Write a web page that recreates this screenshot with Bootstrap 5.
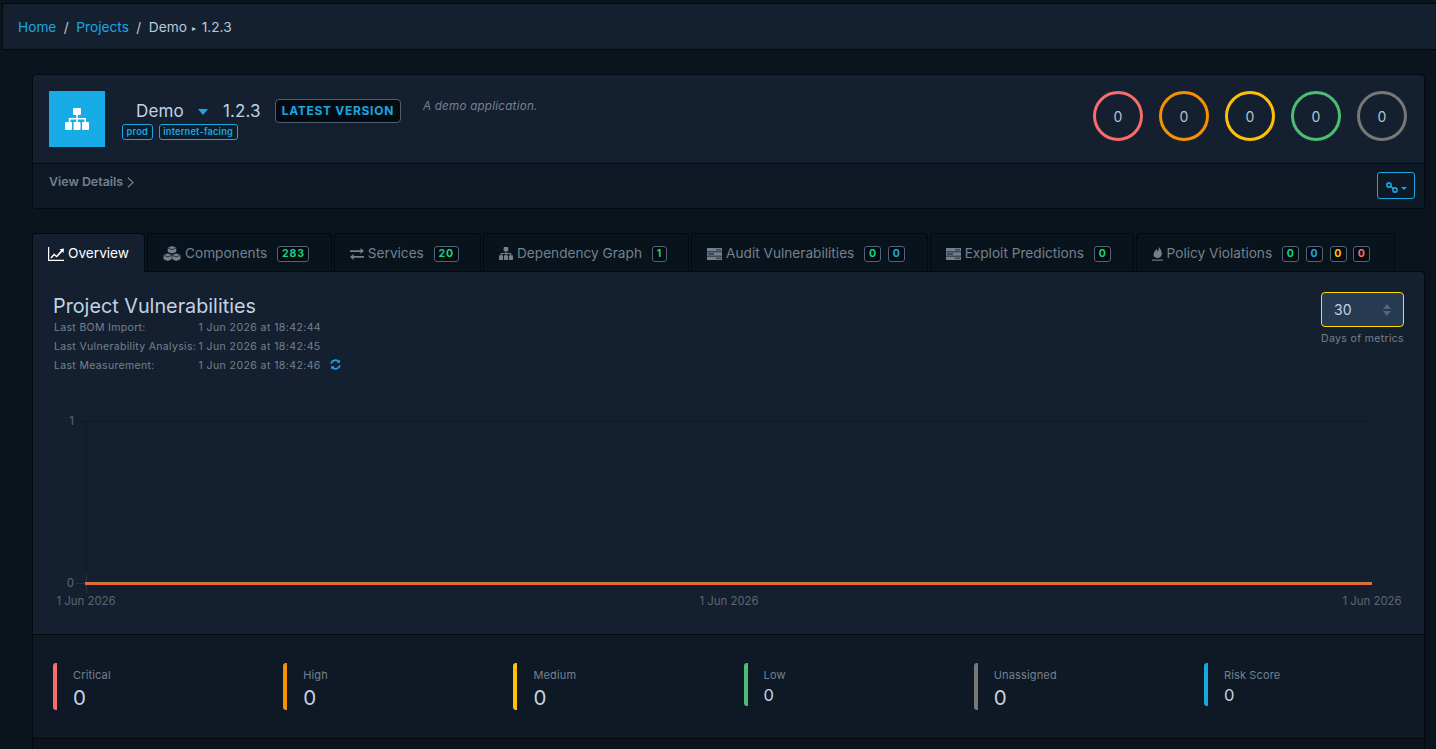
<!DOCTYPE html>
<html lang="en">
<head>
<meta charset="utf-8">
<title>Demo 1.2.3</title>
<link href="https://cdn.jsdelivr.net/npm/bootstrap@5.3.0/dist/css/bootstrap.min.css" rel="stylesheet">
<style>
:root{--bgd:#0a141d;--panel:#14202f;--foot:#0e1925;--line:#05090f;--muted:#73818f;--cy:#17a8e0;}
html,body{height:749px;overflow:hidden}
body{background:var(--bgd);font-family:Inter,"Liberation Sans",sans-serif;color:#c3d2e3;font-size:14px}
.topbar{margin:3px 0 0 2px;height:47px;background:var(--panel);border:1px solid var(--line);border-right:0;padding:2px 15px 0;display:flex;align-items:center}
.topbar .breadcrumb{margin:0;font-size:13.7px}
.topbar .breadcrumb-item a{color:var(--cy);text-decoration:none}
.topbar .breadcrumb-item,.topbar .breadcrumb-item.active{color:#bcc9d6}
.topbar .breadcrumb-item+.breadcrumb-item{padding-left:7.5px}
.topbar .breadcrumb-item+.breadcrumb-item::before{color:#bcc9d6;padding-right:7.5px}
.tiny-arrow{font-size:8px;vertical-align:1px;margin:0 1.6px}
.page-main{padding:24px 11px 0 32px}
.hdr-card{background:var(--panel);border:1px solid var(--line);border-radius:4px;height:135px;overflow:hidden}
.hdr-body{height:89px;padding:16px 17px 0 16px;border-bottom:1px solid var(--line)}
.hdr-foot{height:44px;background:var(--foot);padding:8px 9px 0 16px}
.logo-box{width:56px;height:56px;background:#17ace5;flex:none}
.name-col{margin-left:17px;margin-top:8px}
.proj-name{font-size:17px;line-height:24px;padding-left:14px;color:#c3d2e3;letter-spacing:.15px;white-space:nowrap}
.caret-dn{display:inline-block;border:5.5px solid transparent;border-top:6px solid var(--cy);border-bottom:0;margin:0 15px 2px 14px}
.latest{background:#040a10;border:1px solid #4e6074;border-radius:4px;color:var(--cy);font-size:12px;font-weight:700;letter-spacing:.7px;line-height:22px;padding:0 6px;margin-left:14px;white-space:nowrap}
.tagline{display:flex;gap:6px;margin-top:1px}
.tagpill{border:1px solid var(--cy);border-radius:3px;color:var(--cy);font-size:9.2px;font-weight:600;line-height:13.5px;padding:0 3.6px;letter-spacing:.22px;background:#0e1c2a}
.descr{font-size:11.6px;font-style:italic;color:var(--muted);margin-left:22px;line-height:14px;margin-top:8px;letter-spacing:.25px;white-space:nowrap}
.ring{width:50px;height:50px;border-radius:50%;border:3px solid;font-size:14px;color:#b4c3d2;flex:none}
.r-crit{border-color:#f86c6b}.r-high{border-color:#f89100}.r-med{border-color:#ffc107}.r-low{border-color:#4dbd74}.r-un{border-color:#777}
.view-link{font-size:12.4px;font-weight:600;color:var(--muted);text-decoration:none;line-height:20px}
.link-btn{width:38px;height:27px;border:1px solid var(--cy);border-radius:3px;background:transparent;padding:0;color:var(--cy);margin-top:0}
.link-btn .caret-sm{display:inline-block;border:3px solid transparent;border-top:3px solid var(--cy);border-bottom:0;margin-left:3px;vertical-align:2px}
.dt-tabs{margin-top:24px;border:0;flex-wrap:nowrap;gap:2px;height:38px}
.dt-tabs .nav-link{height:38px;background:#09131c;border:1px solid var(--line);border-bottom:0;border-radius:4px 4px 0 0;color:var(--muted);font-size:13.65px;padding:2px 15px 0;margin:0;display:flex;align-items:center;white-space:nowrap}
.dt-tabs .nav-link.active{background:var(--panel);color:#fff;border-color:var(--line);position:relative;z-index:2;height:39px;padding-bottom:1px}
.dt-tabs svg.ti{margin-right:4px;flex:none}
.cnt{display:inline-block;background:#040a10;border:1px solid #51647a;border-radius:3px;font-size:10.5px;font-weight:700;line-height:14px;padding:0 3.5px;letter-spacing:.9px;margin-left:6.7px}
.cnt:first-of-type{margin-left:10.2px}
.cnt:last-child{margin-right:6.5px}
.nav-item:last-child .cnt:last-child{margin-right:8.5px}
.c-g{color:#10d67c}.c-b{color:var(--cy)}.c-y{color:#ffc107}.c-r{color:#f86c6b}
.tab-panel{background:var(--panel);border:1px solid var(--line);border-bottom:0;border-radius:0 4px 0 0}
.head-wrap{padding:20px 20px 0;height:123px}
.proj-title{font-size:19.8px;font-weight:400;line-height:24px;margin:2px 0 0;color:#c3d2e3}
.meta-grid{display:grid;grid-template-columns:144.5px auto;font-size:10.5px;line-height:19px;color:var(--muted);letter-spacing:.33px;padding-left:1px;justify-content:start}
.meta-date{letter-spacing:.42px}
.refresh{margin-left:9px;vertical-align:-1px}
.days-col{width:83px;text-align:right}
.days-sel{width:83px;height:35px;background-color:#263a52;border:1px solid #ffdd00;border-radius:4px;color:#c3d2e3;font-size:14px;padding:0 12px;background-size:10px 14px;background-position:right 11px center;background-image:url("data:image/svg+xml,%3Csvg xmlns='http://www.w3.org/2000/svg' viewBox='0 0 10 14'%3E%3Cpath d='M5 1l4 5H1zM5 13l4-5H1z' fill='%2353667a'/%3E%3C/svg%3E")}
.days-lbl{font-size:10.5px;color:var(--muted);white-space:nowrap;letter-spacing:.34px;margin-top:5px;line-height:13px}
.chart-wrap{height:239px}
.chart-svg{display:block;width:100%;height:239px}
.chart-svg text{font-family:Inter,"Liberation Sans",sans-serif;font-size:11.4px;fill:#5c6670}
.stat-foot{background:var(--foot);border-top:1px solid var(--line);border-bottom:1px solid var(--line);height:105px;padding:28px 0 0 20px;display:grid;grid-template-columns:repeat(5,230.2px) 1fr}
.stat{display:flex;gap:16px;align-items:flex-start}
.sbar{width:4px;height:47px;border-radius:3px 0 0 3px;flex:none}
.sbar.shrt{height:43px}
.stat-lab{font-size:11px;color:var(--muted);line-height:14px;margin-top:5px;letter-spacing:.15px}
.stat-val{font-size:20.5px;line-height:24px;margin-top:4px;color:#c3d2e3}
.stat-val.smv{font-size:16.5px;line-height:20px;margin-top:3px}
.rest{height:10px;background:var(--bgd)}
</style>
</head>
<body>
<nav class="topbar" aria-label="breadcrumb">
  <ol class="breadcrumb">
    <li class="breadcrumb-item"><a href="#">Home</a></li>
    <li class="breadcrumb-item"><a href="#">Projects</a></li>
    <li class="breadcrumb-item active">Demo <span class="tiny-arrow">▸</span> 1.2.3</li>
  </ol>
</nav>
<main class="page-main">
  <section class="hdr-card">
    <div class="hdr-body d-flex">
      <div class="logo-box d-flex align-items-center justify-content-center">
        <svg width="24" height="22" viewBox="0 0 24 22" fill="#fff"><rect x="8" y="0" width="8" height="7" rx="1"/><rect x="0" y="14" width="7" height="8" rx="1"/><rect x="8.500" y="14" width="7" height="8" rx="1"/><rect x="17" y="14" width="7" height="8" rx="1"/><path d="M11.200 7h1.600v3h8.200v4h-1.600v-2.400h-6.600V14h-1.600v-2.400H5.400V14H3.800v-4h7.400z"/></svg>
      </div>
      <div class="name-col">
        <div class="d-flex align-items-center">
          <span class="proj-name">Demo<span class="caret-dn"></span>1.2.3</span>
          <span class="latest">LATEST VERSION</span>
        </div>
        <div class="tagline"><span class="tagpill">prod</span><span class="tagpill">internet-facing</span></div>
      </div>
      <div class="descr">A demo application.</div>
      <div class="d-flex gap-3 ms-auto">
        <div class="ring r-crit d-flex align-items-center justify-content-center">0</div>
        <div class="ring r-high d-flex align-items-center justify-content-center">0</div>
        <div class="ring r-med d-flex align-items-center justify-content-center">0</div>
        <div class="ring r-low d-flex align-items-center justify-content-center">0</div>
        <div class="ring r-un d-flex align-items-center justify-content-center">0</div>
      </div>
    </div>
    <div class="hdr-foot d-flex justify-content-between align-items-start">
      <a class="view-link" href="#">View Details<svg class="ms-1" width="7" height="11" viewBox="0 0 7 11" fill="none" stroke="#73818f" stroke-width="1.200"><path d="M1 .8 6 5.500 1 10.200"/></svg></a>
      <button class="btn link-btn" type="button" aria-label="Links"><svg width="12" height="11" viewBox="0 0 12 11" fill="none" stroke="#17a8e0" stroke-width="1.600"><circle cx="3" cy="3" r="2.100"/><circle cx="9" cy="8" r="2.100"/><path d="M4.500 4.300 7.500 6.700"/></svg><span class="caret-sm"></span></button>
    </div>
  </section>

  <ul class="nav nav-tabs dt-tabs">
    <li class="nav-item"><a class="nav-link active" href="#"><svg class="ti" width="16" height="14" viewBox="0 0 16 14" fill="#fff"><path d="M0 0h1.200v12.800H16V14H0z"/><path d="M2.400 10.500 6 6.500l2.600 2L13 3.600l-1.500-1.300L16 1.500 15.500 6l-1.300-1.300L8.800 10.600l-2.600-2-2.800 3z"/></svg>Overview</a></li>
    <li class="nav-item"><a class="nav-link" href="#"><svg class="ti" width="18" height="15" viewBox="0 0 17 14" fill="#73818f"><path d="M8.500 0 12.500 1.500V5.500L8.500 7 4.500 5.500V1.500z"/><path d="M4.500 7 8.200 8.500V12.500L4.500 14 .5 12.500V8.500z"/><path d="M12.500 7 16.500 8.500V12.500L12.500 14 8.800 12.500V8.500z"/><path d="M4.800 2 8.500 3.300 12.200 2M1 8.900 4.500 10.100 8 8.900M9 8.900 12.500 10.100 16 8.900" fill="none" stroke="#09131c" stroke-width=".7"/></svg>Components<span class="cnt c-g">283</span></a></li>
    <li class="nav-item"><a class="nav-link" href="#"><svg class="ti" width="14" height="12" viewBox="0 0 14 12" fill="#73818f"><path d="M0 2.300h10.500V0L14 3.100 10.500 5.800V3.900H0zM14 8H3.500V6L0 8.900 3.500 12V9.700H14z"/></svg>Services<span class="cnt c-g">20</span></a></li>
    <li class="nav-item"><a class="nav-link" href="#"><svg class="ti" width="14" height="13" viewBox="0 0 24 22" fill="#73818f"><rect x="8" y="0" width="8" height="7" rx="1"/><rect x="0" y="14" width="7" height="8" rx="1"/><rect x="8.500" y="14" width="7" height="8" rx="1"/><rect x="17" y="14" width="7" height="8" rx="1"/><path d="M11 7h2v3h8v4h-2v-2h-6v2h-2v-2H5v2H3v-4h8z"/></svg>Dependency Graph<span class="cnt c-g">1</span></a></li>
    <li class="nav-item"><a class="nav-link" href="#"><svg class="ti" width="15" height="12" viewBox="0 0 15 12" fill="#73818f"><path d="M0 0h15v3.500H0zM0 4.300h15v3.400H0zM0 8.500h15V12H0z"/><path d="M9 1.400h5v.8H9zM1 5.600h6v.8H1zM9 9.800h5v.8H9z" fill="#09131c"/></svg>Audit Vulnerabilities<span class="cnt c-g">0</span><span class="cnt c-b">0</span></a></li>
    <li class="nav-item"><a class="nav-link" href="#"><svg class="ti" width="15" height="12" viewBox="0 0 15 12" fill="#73818f"><path d="M0 0h15v3.500H0zM0 4.300h15v3.400H0zM0 8.500h15V12H0z"/><path d="M9 1.400h5v.8H9zM1 5.600h6v.8H1zM9 9.800h5v.8H9z" fill="#09131c"/></svg>Exploit Predictions<span class="cnt c-g">0</span></a></li>
    <li class="nav-item"><a class="nav-link" href="#"><svg class="ti" width="11" height="15" viewBox="0 0 11 15" fill="#73818f"><path d="M6.500 0C7.200 2 9.500 3.800 9.800 7 10 10 8 12 5.300 12 2.800 12 1.500 10.400 1.500 8.600 1.500 6 3.500 5 4.500 3 5 4 5.500 4.700 5.700 5.500 6.700 4 7.200 2 6.500 0z"/><rect x="0" y="13.600" width="11" height="1.100"/></svg>Policy Violations<span class="cnt c-g">0</span><span class="cnt c-b">0</span><span class="cnt c-y">0</span><span class="cnt c-r">0</span></a></li>
  </ul>

  <section class="tab-panel">
    <div class="head-wrap d-flex justify-content-between">
      <div>
        <h3 class="proj-title">Project Vulnerabilities</h3>
        <div class="meta-grid">
          <span>Last BOM Import:</span><span class="meta-date">1 Jun 2026 at 18:42:44</span>
          <span>Last Vulnerability Analysis:</span><span class="meta-date">1 Jun 2026 at 18:42:45</span>
          <span>Last Measurement:</span><span class="meta-date">1 Jun 2026 at 18:42:46<svg class="refresh" width="11" height="11" viewBox="0 0 10 10" fill="none" stroke="#17a8e0" stroke-width="1.600"><path d="M1 4.200A4 4 0 0 1 8 2.600M9 5.800A4 4 0 0 1 2 7.400"/><path d="M9 .5v3H6M1 9.500v-3h3" fill="#17a8e0" stroke="none"/></svg></span>
        </div>
      </div>
      <div class="days-col">
        <select class="form-select days-sel" aria-label="Days of metrics"><option>30</option></select>
        <div class="days-lbl">Days of metrics</div>
      </div>
    </div>
    <div class="chart-wrap">
      <svg class="chart-svg" role="img" aria-label="Project vulnerabilities chart">
        <line x1="42" y1="26.500" x2="1339" y2="26.500" stroke="#101a27"/>
        <line x1="53.500" y1="26" x2="53.500" y2="198" stroke="#101a27"/>
        <line x1="43" y1="188.500" x2="52" y2="188.500" stroke="#29343f"/>
        <line x1="53.500" y1="178" x2="53.500" y2="198" stroke="#29343f"/>
        <text x="41" y="30" text-anchor="end">1</text>
        <text x="41" y="192" text-anchor="end">0</text>
        <rect x="52" y="187" width="1287" height="1" fill="#c47f3d"/>
        <rect x="52" y="188" width="1287" height="2" fill="#f4603c"/>
        <text x="53" y="210" text-anchor="middle">1 Jun 2026</text>
        <text x="696" y="210" text-anchor="middle">1 Jun 2026</text>
        <text x="1339" y="210" text-anchor="middle">1 Jun 2026</text>
      </svg>
    </div>
    <div class="stat-foot">
      <div class="stat"><span class="sbar" style="background:#f86c6b"></span><div><div class="stat-lab">Critical</div><div class="stat-val">0</div></div></div>
      <div class="stat"><span class="sbar" style="background:#f89100"></span><div><div class="stat-lab">High</div><div class="stat-val">0</div></div></div>
      <div class="stat"><span class="sbar" style="background:#ffc107"></span><div><div class="stat-lab">Medium</div><div class="stat-val">0</div></div></div>
      <div class="stat"><span class="sbar shrt" style="background:#4dbd74"></span><div><div class="stat-lab">Low</div><div class="stat-val smv">0</div></div></div>
      <div class="stat"><span class="sbar" style="background:#777"></span><div><div class="stat-lab">Unassigned</div><div class="stat-val">0</div></div></div>
      <div class="stat"><span class="sbar shrt" style="background:#17a8e0"></span><div><div class="stat-lab">Risk Score</div><div class="stat-val smv">0</div></div></div>
    </div>
    <div class="rest"></div>
  </section>
</main>
<script src="https://cdn.jsdelivr.net/npm/bootstrap@5.3.0/dist/js/bootstrap.bundle.min.js"></script>
</body>
</html>
